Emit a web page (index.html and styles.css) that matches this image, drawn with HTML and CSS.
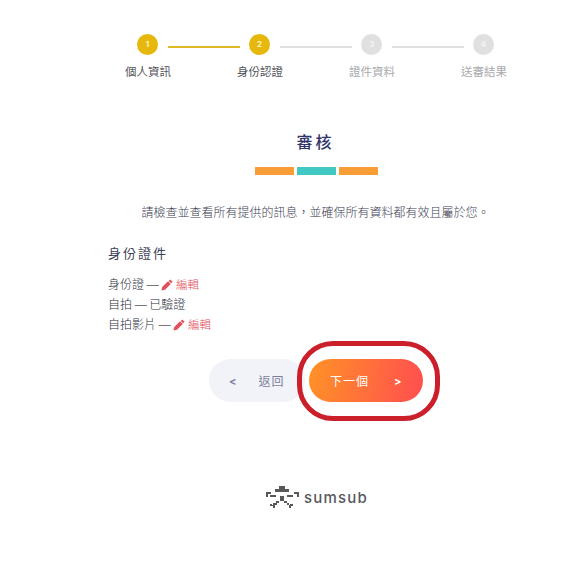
FILE: index.html
```html
<!DOCTYPE html>
<html lang="zh-Hant">
<head>
<meta charset="utf-8">
<title>審核</title>
<link rel="stylesheet" href="styles.css">
</head>
<body>
<main class="page">
  <div class="track">
    <span class="dot dot-on">1</span><span class="line line-on"></span>
    <span class="dot dot-on">2</span><span class="line"></span>
    <span class="dot">3</span><span class="line"></span>
    <span class="dot">4</span>
  </div>
  <div class="labels">
    <span>個人資訊</span><span>身份認證</span><span class="off">證件資料</span><span class="off">送審結果</span>
  </div>
  <h1 class="title">審核</h1>
  <div class="bars"><i class="bar"></i><i class="bar bar-teal"></i><i class="bar"></i></div>
  <p class="intro">請檢查並查看所有提供的訊息，並確保所有資料都有效且屬於您。</p>
  <section class="docs">
    <h2 class="docs-title">身份證件</h2>
    <div class="row">身份證 <span class="dash">—</span> <svg class="pen" viewBox="0 0 12 12"><path d="M9.2.4l2.4 2.4-1.5 1.5-2.4-2.4zM7 2.2l2.8 2.8-5.8 5.8-3.6.8.8-3.6z"/></svg> <a class="edit">編輯</a></div>
    <div class="row">自拍 <span class="dash">—</span> 已驗證</div>
    <div class="row">自拍影片 <span class="dash">—</span> <svg class="pen" viewBox="0 0 12 12"><path d="M9.2.4l2.4 2.4-1.5 1.5-2.4-2.4zM7 2.2l2.8 2.8-5.8 5.8-3.6.8.8-3.6z"/></svg> <a class="edit">編輯</a></div>
  </section>
  <div class="actions">
    <button class="btn btn-back"><span class="arr">&lt;</span><span class="btn-text">返回</span></button>
    <div class="next-wrap">
      <button class="btn btn-next"><span class="btn-text">下一個</span><span class="arr">&gt;</span></button>
    </div>
  </div>
  <div class="brand">
    <svg class="mark" viewBox="0 0 33 22">
      <path d="M13 0h6v3h4v3h-14v-3h4z"/>
      <path d="M0 6h5v2h-3v3h-2zM28 6h5v5h-2v-3h-3z"/>
      <path d="M4 9h6v2h-6zM21 9h6v2h-6zM14 10h4v5h-4z"/>
      <path d="M10 15h3v2h-2v2h-2v3h-2v-2h-3v-2h2v1h1v-2h3zM18 15h3v2h2v2h1v-1h3v2h-2v2h-2v-3h-2v-2h-3z"/>
    </svg>
    <span class="brand-name">sumsub</span>
  </div>
</main>
</body>
</html>
```
FILE: styles.css
```css
*, *::before, *::after { box-sizing: border-box; }
html, body { margin: 0; background: #fff; }
body { font-family: "Noto Sans CJK TC", "Noto Sans", sans-serif; color: #3f4150; }
.page { width: 585px; height: 565px; overflow: hidden; padding-top: 34px; }

.track { display: flex; align-items: center; margin-left: 137px; height: 21px; }
.dot { flex: none; width: 21px; height: 21px; border-radius: 50%; background: #e0e0e0; color: #f3f3f3;
  font: 700 8px/21px "Inter", sans-serif; text-align: center; }
.dot-on { background: #e6b80e; color: #fff3c0; }
.line { flex: none; width: 72px; height: 2px; margin: 4px 9.5px 0; background: #e0e0e0; }
.line-on { background: #e0b824; }

.labels { display: grid; grid-template-columns: repeat(4, 112px); margin: 8px 0 0 92px; font-size: 11.5px; line-height: 16px; text-align: center; color: #55565c; }
.off { color: #a9a9ad; }

.title { margin: 51px 0 0; padding-left: 46px; font-size: 16px; line-height: 22px; letter-spacing: 3px; font-weight: 500; text-align: center; color: #31356b; }
.bars { display: flex; justify-content: center; gap: 3px; margin: 15px 0 0 47px; }
.bar { width: 39px; height: 8px; background: #f99d36; }
.bar-teal { background: #3fc9c2; }

.intro { margin: 28px 0 0; padding-left: 46px; font-size: 12px; line-height: 18px; text-align: center; color: #3c3e52; font-weight: 300; }

.docs { margin: 23px 0 0 108px; font-size: 12px; font-weight: 300; }
.docs-title { margin: 0 0 12px; font-size: 13px; line-height: 18px; font-weight: 400; letter-spacing: 2px; color: #3b3e55; }
.row { height: 20px; line-height: 20px; color: #2c2e3c; }
.dash { font-family: "Liberation Sans", sans-serif; color: #777; }
.pen { width: 12px; height: 12px; vertical-align: -2px; fill: #e2505c; }
.edit { color: #e2505c; font-size: 11.5px; }

.actions { display: flex; margin: 25px 0 0 209px; height: 43px; }
.btn { flex: none; display: flex; align-items: center; height: 43px; border: 0; border-radius: 22px; font-family: inherit; font-size: 12px; padding: 0; }
.btn-text { letter-spacing: 1px; }
.btn-back { width: 96px; background: #f2f3f8; color: #7c7f9c; padding-left: 20px; gap: 22px; }
.btn-next { width: 114px; background: linear-gradient(100deg, #ff9226, #ff4e50); color: #fff; padding-left: 21px; gap: 25px; }
.arr { font: 700 11px "Inter", sans-serif; }
.next-wrap { position: relative; margin-left: 4px; }
.next-wrap::after { content: ""; position: absolute; left: -12px; top: -18px; width: 143px; height: 80px; border: 5px solid #cb1f2b; border-radius: 36px; }

.brand { display: flex; align-items: center; gap: 5px; margin: 84px 0 0 266px; }
.mark { width: 33px; height: 22px; fill: #58585a; }
.brand-name { margin-top: 2px; font: 500 15px/20px "Inter", sans-serif; letter-spacing: 1.2px; color: #58585c; }
```
